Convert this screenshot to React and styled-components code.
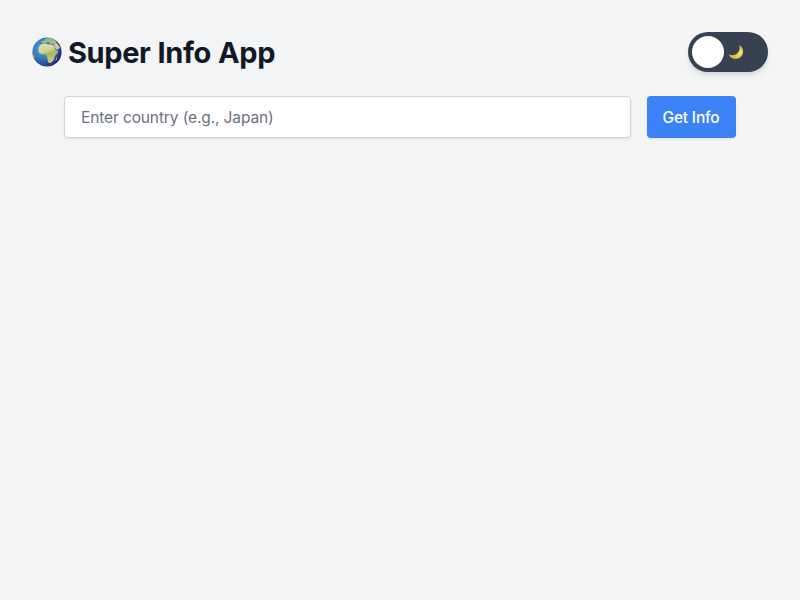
import React, { useState } from "react";
import styled, { createGlobalStyle } from "styled-components";

const GlobalStyle = createGlobalStyle`
  *, *::before, *::after { box-sizing: border-box; }
  body { margin: 0; background: #f3f4f6; color: #111827; font-family: Inter, "Liberation Sans", sans-serif; }
`;

const Page = styled.main`
  min-height: 100vh;
  padding: 32px;
`;

const Header = styled.header`
  display: flex;
  justify-content: space-between;
  align-items: center;
  height: 40px;
  margin-bottom: 24px;
`;

const Title = styled.h1`
  display: flex;
  align-items: center;
  gap: 6px;
  margin: 0;
  font-size: 29px;
  line-height: 36px;
  font-weight: 700;
  letter-spacing: -0.38px;
  word-spacing: 0.6px;
  white-space: nowrap;
`;

const TitleText = styled.span`
  padding-top: 2px;
`;

const GlobeSvg = styled.svg`
  width: 30px;
  height: 30px;
`;

const Toggle = styled.button`
  display: flex;
  align-items: center;
  gap: 4px;
  width: 80px;
  height: 40px;
  padding: 4px;
  border: 0;
  border-radius: 20px;
  background: #374151;
  box-shadow: 0 4px 6px -1px rgba(0, 0, 0, 0.1), 0 2px 4px -2px rgba(0, 0, 0, 0.1);
`;

const Knob = styled.span`
  width: 32px;
  height: 32px;
  border-radius: 50%;
  background: #fff;
`;

const MoonSvg = styled.svg`
  width: 16px;
  height: 16px;
`;

const SearchForm = styled.form`
  display: flex;
  gap: 16px;
  height: 42px;
  padding: 0 32px;
`;

const CountryInput = styled.input`
  flex: 1;
  min-width: 0;
  padding: 9px 16px 7px;
  border: 1px solid #d1d5db;
  border-radius: 4px;
  background: #fff;
  color: #111827;
  font: 400 15.5px/24px Inter, "Liberation Sans", sans-serif;
  letter-spacing: -0.12px;
  box-shadow: 0 1px 2px rgba(0, 0, 0, 0.08);
  outline: none;
  &::placeholder { color: #6b7280; opacity: 1; }
`;

const SubmitButton = styled.button`
  width: 89px;
  padding: 2px 1px 0 0;
  border: 0;
  border-radius: 4px;
  background: #3b82f6;
  color: #fff;
  font: 500 15.5px/24px Inter, "Liberation Sans", sans-serif;
  letter-spacing: -0.2px;
  box-shadow: 0 1px 2px rgba(0, 0, 0, 0.08);
`;

function Globe() {
  return (
    <GlobeSvg viewBox="0 0 30 30" aria-hidden="true">
      <defs>
        <radialGradient id="ocean" cx="36%" cy="38%" r="66%">
          <stop offset="0" stopColor="#5da9da" />
          <stop offset="0.5" stopColor="#347dbd" />
          <stop offset="0.82" stopColor="#24499a" />
          <stop offset="1" stopColor="#1c2b75" />
        </radialGradient>
        <linearGradient id="land" x1="0" y1="0" x2="0.3" y2="1">
          <stop offset="0" stopColor="#e2deb0" />
          <stop offset="0.42" stopColor="#d8d49a" />
          <stop offset="0.62" stopColor="#a6b761" />
          <stop offset="1" stopColor="#cfc57a" />
        </linearGradient>
        <clipPath id="globeClip"><circle cx="15" cy="15" r="14.6" /></clipPath>
      </defs>
      <circle cx="15" cy="15" r="14.6" fill="url(#ocean)" />
      <g clipPath="url(#globeClip)">
        <path d="M7.8 8.6 10 6.9 14.2 6.4 15.7 7.6 18.4 7.5 21.6 8.3 22.8 11.2 24 13.6 26.4 13.5 25.2 16.6 22.7 19.2 22.3 22 20.5 24.5 18.2 26.3 16.4 25.4 15.3 22 15.1 19.2 13.5 17.2 9.5 17.3 6.8 15.2 6.3 12Z" fill="url(#land)" />
        <path d="M9.5 5.8 9.8 4 12.2 3.8 13 2.3 15.7 1.2 19.5 1.2 23 3.5 24.7 5.8 22.8 7.4 20 6.9 18.3 6.9 17 5.1 15 5 13.3 5.9Z" fill="#a5ba7d" />
        <path d="M21.9 7.8 24.7 6.1 27.9 10.3 26.8 12.1 24.4 12.8 22.9 10.4Z" fill="#d1cd94" />
        <path d="M0 16 1.4 17.4 2.7 19.1 2.5 22 1 21.5Z" fill="#a3aa54" />
        <path d="M24.1 21 25.2 19.7 24.6 23.2 23.5 23.8Z" fill="#a4b36d" />
      </g>
    </GlobeSvg>
  );
}

function Moon() {
  return (
    <MoonSvg viewBox="0 0 16 16" aria-hidden="true">
      <defs>
        <linearGradient id="moonlight" x1="1" y1="0" x2="0.4" y2="1">
          <stop offset="0" stopColor="#dfae3a" />
          <stop offset="0.55" stopColor="#f8e05a" />
          <stop offset="1" stopColor="#d5b13d" />
        </linearGradient>
      </defs>
      <path d="M11 1C14 2.5 15.7 5.5 15 8.8 14.2 12.4 11.3 15 7.8 15 4.4 15 1.7 13.2.7 10.3 3.8 12 7.4 11.5 9.6 9.1 11.8 6.8 12.2 3.8 11 1Z" fill="url(#moonlight)" />
    </MoonSvg>
  );
}

export default function App() {
  const [country, setCountry] = useState("");
  return (
    <>
      <GlobalStyle />
      <Page>
        <Header>
          <Title><Globe /><TitleText>Super Info App</TitleText></Title>
          <Toggle type="button" aria-label="Toggle theme"><Knob /><Moon /></Toggle>
        </Header>
        <SearchForm onSubmit={(e) => e.preventDefault()}>
          <CountryInput placeholder="Enter country (e.g., Japan)" value={country} onChange={(e) => setCountry(e.target.value)} />
          <SubmitButton type="submit">Get Info</SubmitButton>
        </SearchForm>
      </Page>
    </>
  );
}
